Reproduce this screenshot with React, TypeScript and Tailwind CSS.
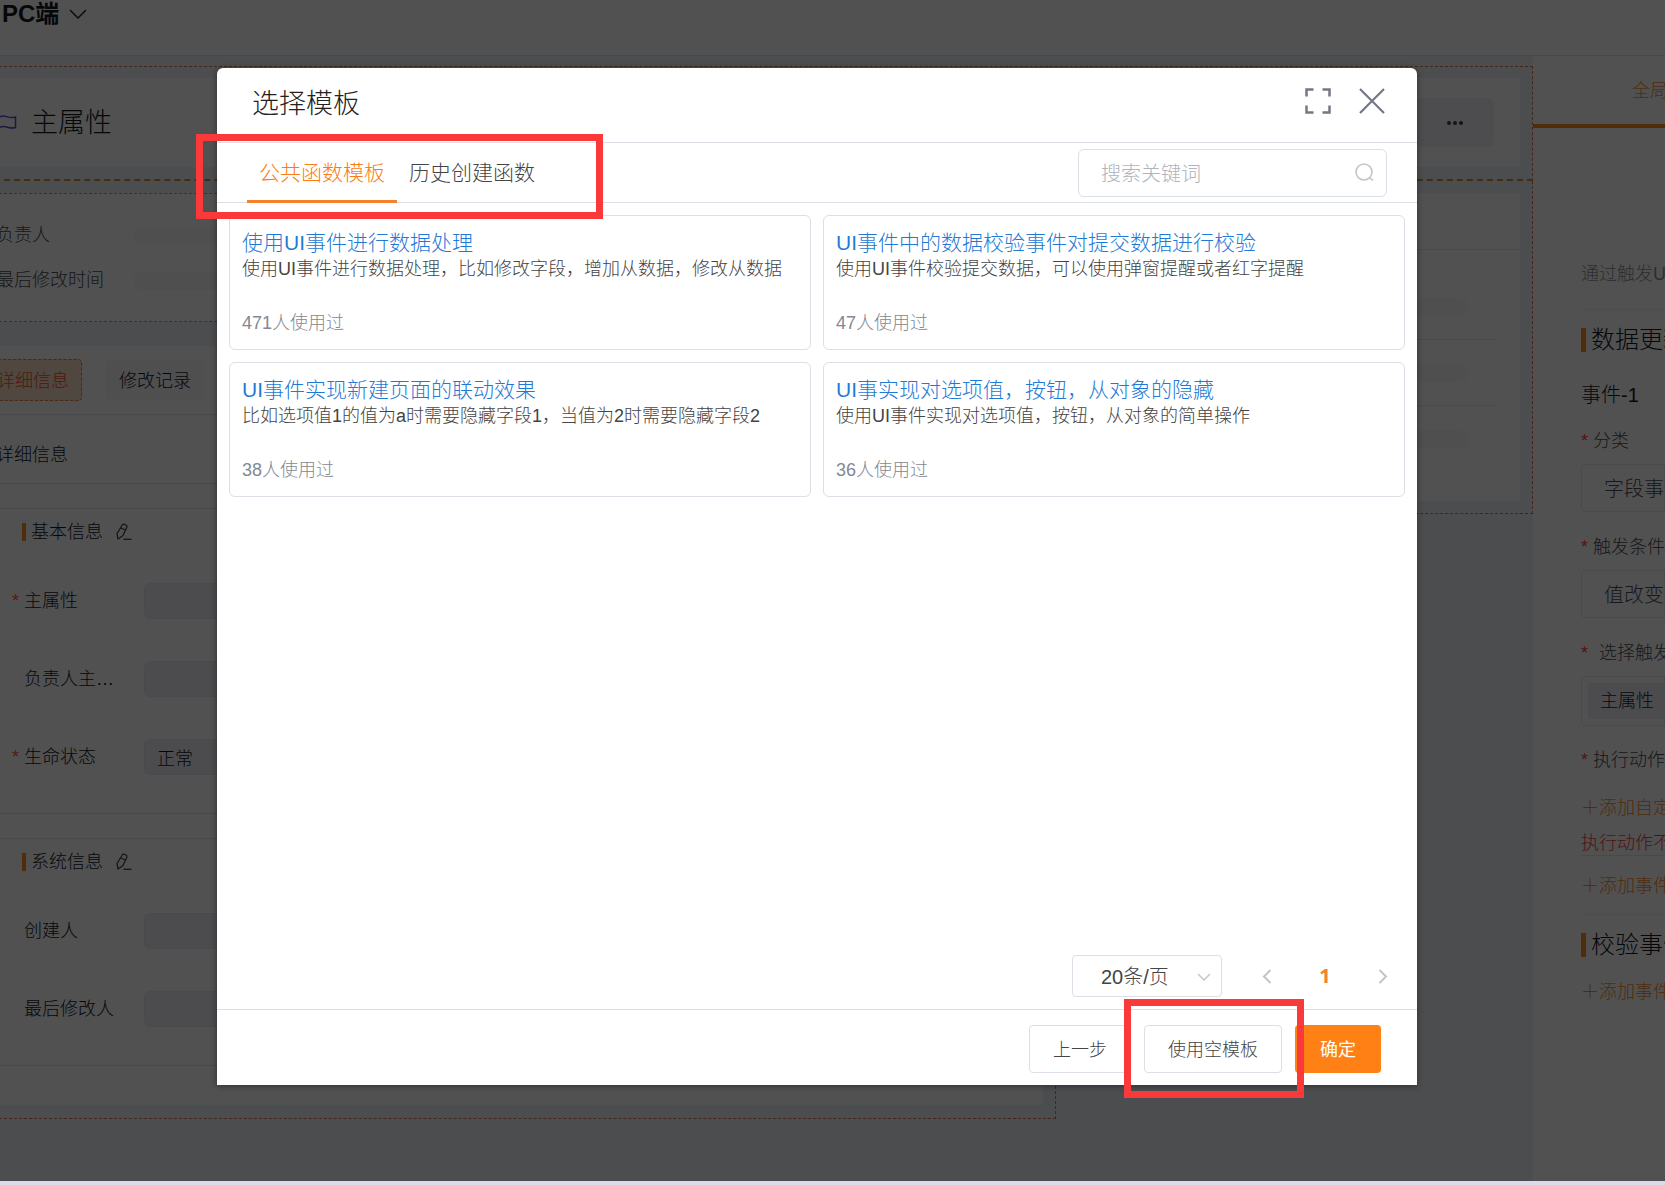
import { useState } from "react";
import type { ReactNode } from "react";

const TABS = ["公共函数模板", "历史创建函数"];

const TEMPLATES = [
  {
    title: "使用UI事件进行数据处理",
    desc: "使用UI事件进行数据处理，比如修改字段，增加从数据，修改从数据",
    used: 471,
  },
  {
    title: "UI事件中的数据校验事件对提交数据进行校验",
    desc: "使用UI事件校验提交数据，可以使用弹窗提醒或者红字提醒",
    used: 47,
  },
  {
    title: "UI事件实现新建页面的联动效果",
    desc: "比如选项值1的值为a时需要隐藏字段1，当值为2时需要隐藏字段2",
    used: 38,
  },
  {
    title: "UI事实现对选项值，按钮，从对象的隐藏",
    desc: "使用UI事件实现对选项值，按钮，从对象的简单操作",
    used: 36,
  },
];

const BASIC_FIELDS = [
  { label: "主属性", required: true, value: "" },
  { label: "负责人主…", required: false, value: "" },
  { label: "生命状态", required: true, value: "正常" },
];

const SYSTEM_FIELDS = [
  { label: "创建人", required: false, value: "" },
  { label: "最后修改人", required: false, value: "" },
];

type Field = { label: string; required: boolean; value: string };

function PencilIcon() {
  return (
    <svg width="17" height="18" viewBox="0 0 17 18" fill="none" stroke="#3c4250" strokeWidth="1.3">
      <path d="M7 2.500 C7.500 1 8.500 0.800 9.500 1.300 L11 2 C12 2.500 12.200 3.300 11.800 4.300 L8 12.500 L3 16 L2 10.500 Z M5.800 5 L10.300 7" strokeLinejoin="round" />
      <path d="M8.500 16.300 H16.500" />
    </svg>
  );
}

function FieldSection({ title, fields }: { title: string; fields: Field[] }) {
  return (
    <section className="border-y border-[#dfe1e7] pb-[17px]">
      <div className="flex items-center h-[46px] mb-[7px] pl-[38px]">
        <span className="w-1 h-[18px] mr-[5px] bg-[#f58a1f]" />
        <h3 className="text-[18px]">{title}</h3>
        <button aria-label={`编辑${title}`} className="ml-3">
          <PencilIcon />
        </button>
      </div>
      {fields.map((f) => (
        <label key={f.label} className="flex items-center h-[78px] pl-7">
          <span className="w-3 text-[18px] text-[#ff5a3c]">{f.required ? "*" : ""}</span>
          <span className="w-[120px] text-[18px]">{f.label}</span>
          <input
            readOnly
            value={f.value}
            className="flex-1 min-w-0 h-9 px-3 mr-6 rounded-md border border-[#e4e6ee] bg-[#ecedf4] text-[18px]"
          />
        </label>
      ))}
    </section>
  );
}

function RequiredLabel({ children }: { children: ReactNode }) {
  return (
    <div className="flex items-center h-[46px] text-[18px] text-[#4a4d55]">
      <span className="shrink-0 w-3 text-[#ff4433]">*</span>
      {children}
    </div>
  );
}

function PanelHeading({ children }: { children: ReactNode }) {
  return (
    <h2 className="flex items-center h-[60px] text-[24px]">
      <span className="shrink-0 w-[5px] h-6 mr-[5px] bg-[#f58a1f]" />
      {children}
    </h2>
  );
}

function Canvas() {
  return (
    <main className="flex-1 min-w-0 flex flex-col bg-[#edeff5] pt-[10px]">
      <div className="-ml-4 border border-dashed border-[#d9794a] border-b-2 border-b-[#d98a2c] pt-[11px] pb-3 pr-3">
        <div className="flex items-center h-[89px] bg-[#fbfcfd] pl-[14px] pr-[26px]">
          <svg width="18" height="20" viewBox="0 0 18 20" fill="none" stroke="#5a48d8" strokeWidth="1.500">
            <path d="M1 4 C5 0.500 9 6.500 16.500 4 V14.500 C10 17 6 11 1 14.500" />
          </svg>
          <h1 className="ml-[14px] pt-[2px] text-[27px]">主属性</h1>
          <button
            aria-label="更多"
            className="ml-auto w-[78px] h-[49px] rounded-md bg-[#eff0f5] flex items-center justify-center gap-[2px]"
          >
            <span className="size-1 rounded-full bg-[#3c3f48]" />
            <span className="size-1 rounded-full bg-[#3c3f48]" />
            <span className="size-1 rounded-full bg-[#3c3f48]" />
          </button>
        </div>
      </div>

      <div className="-ml-4 grid grid-cols-[9fr_4fr] items-start">
        <div className="min-w-0 border-r border-b border-dashed border-[#d9794a] pt-3 pb-[13px]">
          <div className="mr-3 h-[129px] border-y border-dashed border-[#d9944a] bg-[#fbfcfd] pl-3 pt-[19px]">
            {["负责人", "最后修改时间"].map((t) => (
              <div key={t} className="flex items-center h-[45px] text-[18px] text-[#4a4d55]">
                <span className="w-[137px]">{t}</span>
                <span className="flex-1 mr-12 h-[18px] rounded-full bg-[#f5f5f7]" />
              </div>
            ))}
          </div>
          <div className="mt-6 mr-3 bg-[#fbfcfd] pb-[39px]">
            <div className="flex items-center gap-6 h-[69px] border-b border-[#dfe1e7]">
              <button className="h-[42px] px-3 pt-[2px] rounded border border-dashed border-[#ee7c33] bg-[#f8ddc6] text-[18px] text-[#f0502c]">
                详细信息
              </button>
              <button className="h-[42px] px-[13px] pt-[2px] rounded bg-[#f4f5f8] text-[18px]">修改记录</button>
            </div>
            <div className="flex items-center h-[69px] pt-3 pl-3 mb-6 border-b border-[#dfe1e7] text-[18px]">
              详细信息
            </div>
            <FieldSection title="基本信息" fields={BASIC_FIELDS} />
            <div className="h-6" />
            <FieldSection title="系统信息" fields={SYSTEM_FIELDS} />
          </div>
        </div>

        <div className="border-r border-b border-dashed border-[#d9794a] pt-3 pr-3 pb-3">
          <div className="bg-[#fbfcfd] pb-[29px]">
            <div className="h-[57px] mb-6 border-b border-[#e4e6eb]" />
            <div className="mx-6 divide-y divide-[#e4e6eb]">
              {[0, 1, 2].map((i) => (
                <div key={i} className="flex items-center h-[66px] pr-7">
                  <span className="flex-1 h-[18px] rounded-full bg-[#f4f4f7]" />
                </div>
              ))}
            </div>
          </div>
        </div>
      </div>
    </main>
  );
}

function EventPanel() {
  return (
    <aside className="w-[132px] shrink-0 overflow-hidden whitespace-nowrap bg-[#fbfcfd]">
      <div className="flex items-center h-[72px] pl-[99px] pt-[2px] border-b-4 border-[#f58a1f] text-[18px] text-[#f58a1f]">
        全局
      </div>
      <div className="pl-12">
        <p className="pt-[132px] pb-5 border-b border-[#eceef2] text-[18px] leading-[29px] text-[#8b8e96]">
          通过触发U
        </p>
        <PanelHeading>数据更新</PanelHeading>
        <h3 className="flex items-center h-12 pt-[2px] text-[20px]">事件-1</h3>
        <RequiredLabel>分类</RequiredLabel>
        <button className="flex items-center w-full h-12 pl-[22px] pt-[2px] mb-3 rounded-l border border-[#e4e6ec] text-[20px] text-[#4a4d55]">
          字段事件
        </button>
        <RequiredLabel>触发条件</RequiredLabel>
        <button className="flex items-center w-full h-12 pl-[22px] pt-[2px] mb-3 rounded-l border border-[#e4e6ec] text-[20px] text-[#4a4d55]">
          值改变
        </button>
        <RequiredLabel>
          <span className="pl-[6px]">选择触发</span>
        </RequiredLabel>
        <div className="flex items-center h-[50px] pl-[6px] mb-[11px] rounded-l border border-[#e4e6ec]">
          <span className="flex items-center flex-1 h-9 pl-3 bg-[#ecedf4] text-[18px]">主属性</span>
        </div>
        <RequiredLabel>执行动作</RequiredLabel>
        <button className="flex items-center h-12 pt-[2px] text-[18px] text-[#f58a1f]">＋添加自定</button>
        <p className="h-[25px] leading-6 border-b border-[#e0e2e8] text-[18px] text-[#f04040]">执行动作不</p>
        <div className="border-b border-[#eceef2]">
          <button className="flex items-center h-[58px] pt-[2px] text-[18px] text-[#f58a1f]">＋添加事件</button>
        </div>
        <PanelHeading>校验事件</PanelHeading>
        <button className="flex items-center h-[34px] text-[18px] text-[#f58a1f]">＋添加事件</button>
      </div>
    </aside>
  );
}

function TemplateDialog() {
  const [tab, setTab] = useState(0);

  return (
    <div
      role="dialog"
      aria-label="选择模板"
      className="flex-1 flex flex-col rounded-t-md bg-white shadow-[0_1px_6px_rgba(0,0,0,0.4)]"
    >
      <header className="flex items-center h-[75px] pl-[35px] pr-8 pb-2 border-b border-[#dcdfe6]">
        <h2 className="pt-[6px] text-[27px] text-[#222]">选择模板</h2>
        <button aria-label="全屏" className="ml-auto">
          <svg width="26" height="26" viewBox="0 0 26 26" fill="none" stroke="#737885" strokeWidth="2.500">
            <path d="M1.500 8.500 V1.500 H8.500 M17.500 1.500 H24.500 V8.500 M24.500 17.500 V24.500 H17.500 M8.500 24.500 H1.500 V17.500" />
          </svg>
        </button>
        <button aria-label="关闭" className="ml-7">
          <svg width="26" height="26" viewBox="0 0 26 26" fill="none" stroke="#737885" strokeWidth="2.200">
            <path d="M1 1 L25 25 M25 1 L1 25" />
          </svg>
        </button>
      </header>

      <div className="relative flex items-center justify-between h-[60px] px-[30px] border-b border-[#dcdfe6]">
        <nav className="flex self-stretch">
          {TABS.map((t, i) => (
            <button
              key={t}
              onClick={() => setTab(i)}
              className={`px-3 pt-[2px] h-[60px] border-b-3 text-[21px] ${
                tab === i ? "border-[#f5822b] text-[#fa7c14]" : "border-transparent text-[#444]"
              }`}
            >
              {t}
            </button>
          ))}
        </nav>
        <label className="flex items-center w-[309px] h-12 px-3 rounded-md border border-[#dcdfe6]">
          <input
            aria-label="搜索关键词"
            placeholder="搜索关键词"
            className="flex-1 min-w-0 pl-[10px] pt-[2px] text-[20px] outline-none placeholder:text-[#b0b3bb]"
          />
          <svg width="19" height="19" viewBox="0 0 19 19" fill="none" stroke="#c4c6cc" strokeWidth="1.600">
            <circle cx="9" cy="9" r="8" />
            <path d="M14.800 14.800 L18 17.500" />
          </svg>
        </label>
        <div className="pointer-events-none absolute -left-[21px] -top-[9px] w-[407px] h-[85px] border-7 border-[#fa3a3a]" />
      </div>

      <div className="flex-1 p-3">
        <div className="grid grid-cols-2 gap-3">
          {TEMPLATES.map((t) => (
            <article key={t.title} className="h-[135px] px-3 pt-[13px] rounded-md border border-[#dcdfe6]">
              <h3 className="text-[21px] leading-[27px]">
                <a href="#" className="text-[#1f7ad6]">{t.title}</a>
              </h3>
              <p className="text-[18px] leading-[26px] truncate text-[#444]">{t.desc}</p>
              <p className="mt-7 text-[18px] leading-[26px] text-[#858890]">{t.used}人使用过</p>
            </article>
          ))}
        </div>
      </div>

      <div className="flex items-center justify-end pr-[29px] pb-3">
        <div className="relative w-[150px] h-[42px]">
          <select
            aria-label="每页条数"
            className="appearance-none w-full h-full pl-7 pt-[2px] rounded border border-[#dcdfe6] text-[20px] text-[#444]"
          >
            <option>20条/页</option>
          </select>
          <svg className="pointer-events-none absolute right-[11px] top-[18px]" width="14" height="8" viewBox="0 0 14 8" fill="none" stroke="#c4c6cc" strokeWidth="1.500">
            <path d="M1 1 L7 7 L13 1" />
          </svg>
        </div>
        <button aria-label="上一页" className="ml-10">
          <svg width="10" height="15" viewBox="0 0 10 15" fill="none" stroke="#c0c4cc" strokeWidth="2">
            <path d="M8.500 1 L2 7.500 L8.500 14" />
          </svg>
        </button>
        <button className="w-[106px] font-['Open_Sans',sans-serif] text-[20px] font-bold text-[#f5822b]">1</button>
        <button aria-label="下一页">
          <svg width="10" height="15" viewBox="0 0 10 15" fill="none" stroke="#c0c4cc" strokeWidth="2">
            <path d="M1.500 1 L8 7.500 L1.500 14" />
          </svg>
        </button>
      </div>

      <footer className="relative flex justify-end gap-[13px] pt-[15px] pr-9 pb-3 border-t border-[#dcdfe6] text-[18px]">
        <button className="h-12 px-[23px] pt-[2px] rounded border border-[#dcdfe6] text-[#444]">上一步</button>
        <button className="h-12 px-[23px] pt-[2px] rounded border border-[#dcdfe6] text-[#444]">使用空模板</button>
        <button className="h-12 px-[25px] pt-[2px] rounded bg-[#ff8014] font-normal text-white">确定</button>
        <div className="pointer-events-none absolute right-[113px] -top-[11px] w-[180px] h-[99px] border-7 border-[#fa3a3a]" />
      </footer>
    </div>
  );
}

export default function App() {
  return (
    <div className="min-h-screen flex flex-col overflow-hidden bg-[#dcdae6] pb-1 font-['Liberation_Sans','Noto_Sans_CJK_SC',sans-serif] font-light text-[#15181f]">
      <div className="relative flex-1 flex flex-col">
        <header className="flex items-start h-14 bg-[#fbfcfd] border-b border-[#dfe2ea]">
          <button className="flex items-center gap-[10px] pl-[2px] text-[24px] leading-7 font-bold text-[#15171c]">
            PC端
            <svg width="18" height="10" viewBox="0 0 18 10" fill="none" stroke="#20232b" strokeWidth="1.500">
              <path d="M1 1 L9 9 L17 1" />
            </svg>
          </button>
        </header>
        <div className="flex-1 flex">
          <Canvas />
          <EventPanel />
        </div>

        <div className="absolute inset-0 flex bg-black/68 pt-[68px] pr-[248px] pb-24 pl-[217px]">
          <TemplateDialog />
        </div>
      </div>
    </div>
  );
}
